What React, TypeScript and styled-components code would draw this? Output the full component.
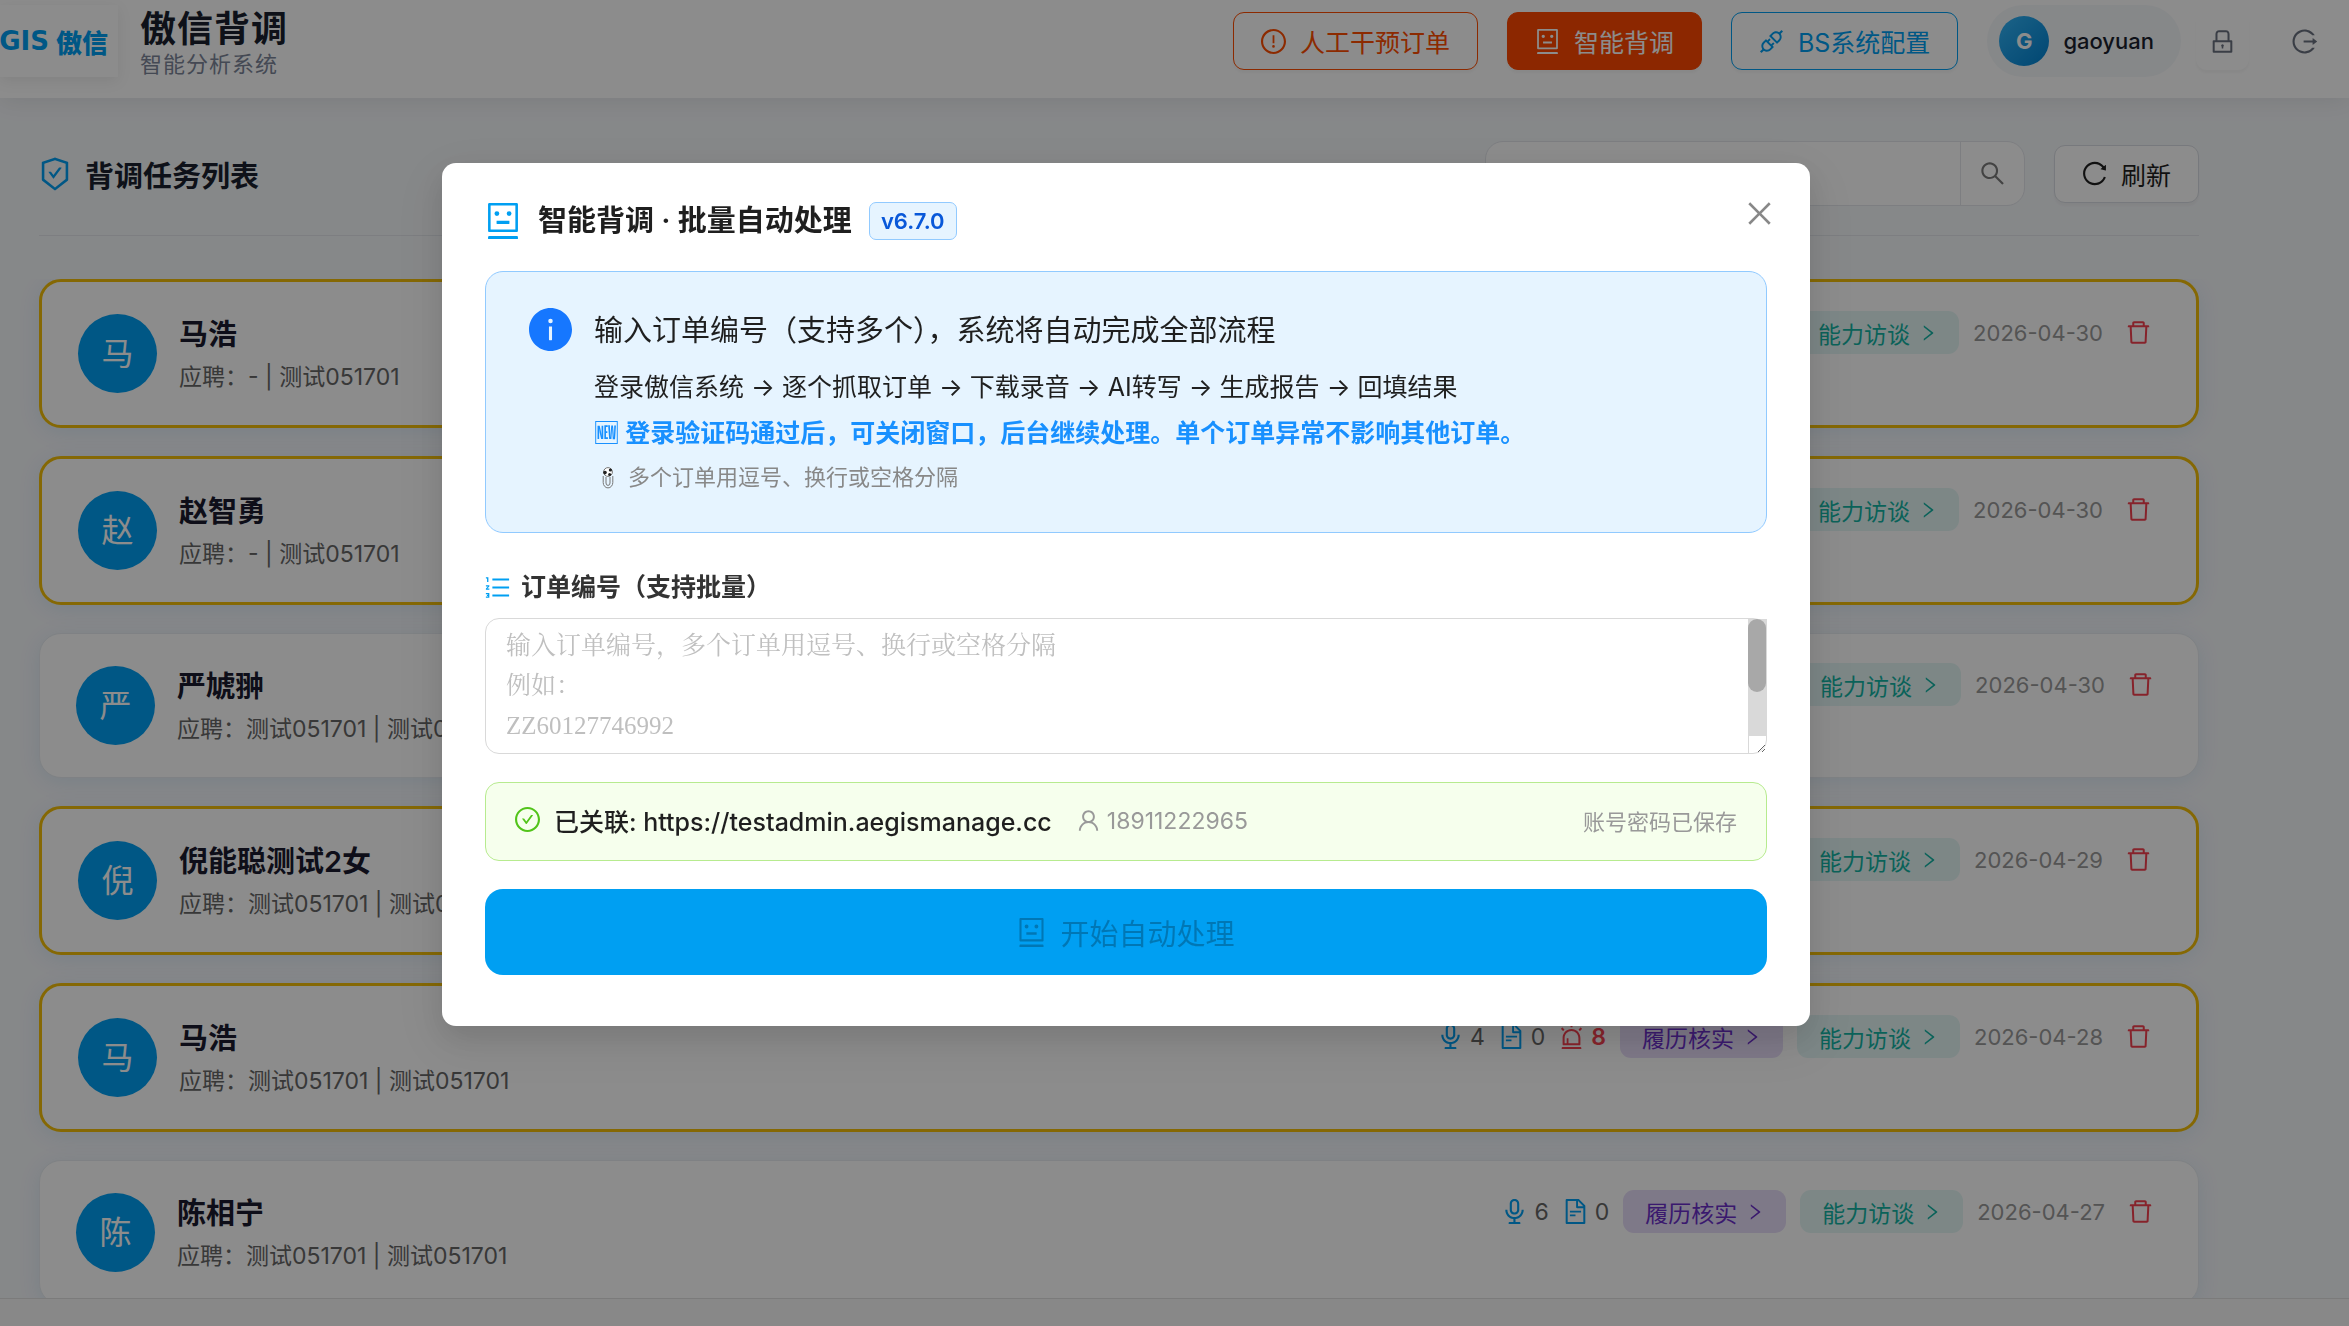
import React from "react";
import styled, { createGlobalStyle } from "styled-components";
import type { IconType } from "react-icons";
import {
  AiFillInfoCircle,
  AiOutlineAlert,
  AiOutlineApi,
  AiOutlineAudio,
  AiOutlineCheckCircle,
  AiOutlineClose,
  AiOutlineDelete,
  AiOutlineExclamationCircle,
  AiOutlineFileText,
  AiOutlineLock,
  AiOutlineLogout,
  AiOutlineOrderedList,
  AiOutlineReload,
  AiOutlineRight,
  AiOutlineRobot,
  AiOutlineSafetyCertificate,
  AiOutlineSearch,
  AiOutlineUser,
} from "react-icons/ai";

const GlobalStyle = createGlobalStyle`
  *, *::before, *::after { box-sizing: border-box; }
  html, body, #root { height: 100%; }
  body {
    margin: 0;
    overflow: hidden;
    background: #f5f7fa;
    color: #1f1f1f;
    font-family: Inter, "Noto Sans CJK SC", sans-serif;
    font-size: 25px;
  }
  button, input, textarea { font: inherit; color: inherit; margin: 0; }
  button { cursor: pointer; }
  h1, h2, h3, p { margin: 0; }
  svg { display: block; flex: none; overflow: visible; }
`;

/* The icon set keeps a 64-unit margin round each drawing; this view box trims it. */
function Icon({ of: Glyph, size = 25 }: { of: IconType; size?: number }) {
  return <Glyph size={size} viewBox="64 64 896 896" aria-hidden />;
}

const Page = styled.div`
  display: flex;
  flex-direction: column;
  height: 100vh;
`;

/* ---------- header ---------- */

const Header = styled.header`
  display: flex;
  flex: none;
  align-items: center;
  justify-content: space-between;
  height: 98px;
  padding: 0 18px 16px 0;
  background: #fff;
  box-shadow: 0 4px 22px rgba(0, 0, 0, 0.08);
  z-index: 1;
`;

const Brand = styled.div`
  display: flex;
  align-items: center;
  gap: 22px;
`;

const Logo = styled.div`
  display: flex;
  align-items: center;
  justify-content: flex-end;
  gap: 7px;
  width: 118px;
  height: 72px;
  padding-right: 10px;
  overflow: hidden;
  background: #fff;
  color: #009ff2;
  font-weight: 900;
  white-space: nowrap;
  box-shadow: 0 4px 14px rgba(0, 0, 0, 0.08);
`;

const LogoLatin = styled.span`
  font-family: "DejaVu Sans", sans-serif;
  font-weight: 700;
  font-size: 26px;
`;

const LogoHan = styled.span`
  font-size: 26px;
`;

const BrandText = styled.div`
  display: flex;
  flex-direction: column;
  padding-top: 2px;
`;

const BrandName = styled.h1`
  color: #1a1f2e;
  font-size: 36px;
  font-weight: 700;
  line-height: 44px;
  letter-spacing: 1px;
`;

const BrandSub = styled.span`
  color: #7d8699;
  font-size: 22px;
  line-height: 26px;
  letter-spacing: 1px;
`;

const HeaderActions = styled.div`
  display: flex;
  align-items: center;
  gap: 29px;
`;

type Tone = "warn" | "solid" | "info" | "plain";

const toneStyles: Record<Tone, string> = {
  warn: "background:#fff;color:#ff4d00;border-color:#ff4d00;",
  solid: "background:#ff4800;color:#fff;border-color:#ff4800;",
  info: "background:#fff;color:#009ff2;border-color:#009ff2;",
  plain: "background:#fff;color:#1f1f1f;border-color:#d9dde3;",
};

const ActionButton = styled.button<{ $tone: Tone }>`
  display: flex;
  align-items: center;
  gap: 14px;
  height: 58px;
  padding: 0 27px;
  border: 1px solid;
  border-radius: 11px;
  font-size: 25px;
  box-shadow: 0 3px 2px rgba(0, 0, 0, 0.03);
  ${(p) => toneStyles[p.$tone]}
`;

const UserPill = styled.div`
  display: flex;
  align-items: center;
  gap: 14px;
  height: 72px;
  margin-right: -14px;
  padding: 0 27px 0 12px;
  border-radius: 36px;
  background: #f5f7fa;
  color: #1a1f2e;
  font-size: 22px;
  font-weight: 500;
`;

const UserAvatar = styled.span`
  display: grid;
  place-items: center;
  width: 50px;
  height: 50px;
  border-radius: 50%;
  background: linear-gradient(135deg, #33b5f7, #0080d0);
  color: #fff;
  font-size: 22px;
  font-weight: 700;
`;

const IconButton = styled.button<{ $raised?: boolean }>`
  display: grid;
  place-items: center;
  width: 53px;
  height: 58px;
  padding: 0;
  border: 0;
  border-radius: 11px;
  background: transparent;
  color: #6b7280;
  box-shadow: ${(p) => (p.$raised ? "0 3px 2px rgba(0, 0, 0, 0.03)" : "none")};
`;

/* ---------- task list ---------- */

const Main = styled.main`
  display: flex;
  flex: 1;
  flex-direction: column;
  min-height: 0;
  padding: 43px 150px 0 39px;
  gap: 43px;
`;

const ListHeader = styled.div`
  display: flex;
  flex: none;
  align-items: center;
  justify-content: space-between;
  padding-bottom: 29px;
  border-bottom: 1px solid #e3e6eb;
`;

const ListTitle = styled.h2`
  display: flex;
  align-items: center;
  gap: 14px;
  color: #1a1f2e;
  font-size: 29px;
  font-weight: 700;

  svg { color: #009ff2; }
`;

const ListTools = styled.div`
  display: flex;
  align-items: center;
  gap: 29px;
`;

const SearchBox = styled.form`
  display: flex;
  width: 540px;
  height: 65px;
  border: 1px solid #e3e6eb;
  border-radius: 18px;
  background: #fff;
  overflow: hidden;
`;

const SearchInput = styled.input`
  flex: 1;
  min-width: 0;
  padding: 0 20px;
  border: 0;
  outline: 0;
  background: transparent;
`;

const SearchButton = styled.button`
  display: grid;
  place-items: center;
  width: 64px;
  padding: 0;
  border: 0;
  border-left: 1px solid #e3e6eb;
  background: transparent;
  color: #7a7a7a;
`;

const TaskList = styled.ul`
  display: flex;
  flex: 1;
  flex-direction: column;
  gap: 28px;
  min-height: 0;
  margin: 0 -39px;
  padding: 0 39px;
  overflow: hidden;
  list-style: none;
`;

const TaskCard = styled.li<{ $flagged: boolean }>`
  display: flex;
  flex: none;
  align-items: flex-start;
  justify-content: space-between;
  padding: 29px 36px;
  border: ${(p) => (p.$flagged ? "3px solid #f2be08" : "1px solid #e8ecf1")};
  border-radius: 22px;
  background: #fff;
  box-shadow: 0 4px 22px rgba(0, 120, 200, 0.1);
`;

const Person = styled.div`
  display: flex;
  align-items: center;
  gap: 22px;
  min-height: 85px;
`;

const PersonAvatar = styled.span`
  display: grid;
  place-items: center;
  width: 79px;
  height: 79px;
  border-radius: 50%;
  background: #009ff2;
  color: #fff;
  font-size: 32px;
  line-height: 40px;
`;

const PersonName = styled.h3`
  margin-bottom: 2px;
  color: #1a1a2e;
  font-size: 29px;
  font-weight: 600;
  line-height: 44px;
`;

const PersonNote = styled.p`
  color: #666;
  font-size: 23px;
  line-height: 36px;
`;

const TaskMeta = styled.div`
  display: flex;
  align-items: center;
  gap: 14px;
  font-size: 23px;
`;

const Stat = styled.span<{ $alert?: boolean }>`
  display: flex;
  align-items: center;
  gap: 7px;
  color: ${(p) => (p.$alert ? "#f5414f" : "#666")};
  font-weight: ${(p) => (p.$alert ? 600 : 400)};

  svg { color: ${(p) => (p.$alert ? "#f5414f" : "#009ff2")}; }
`;

const TagButton = styled.button<{ $kind: "resume" | "talk" }>`
  display: flex;
  align-items: center;
  gap: 9px;
  height: 43px;
  padding: 0 22px;
  border: 0;
  border-radius: 11px;
  background: ${(p) => (p.$kind === "resume" ? "#e6dcf8" : "#e3f6f5")};
  color: ${(p) => (p.$kind === "resume" ? "#6b2fc9" : "#13b3a3")};
`;

const TaskDate = styled.time`
  color: #999;
  font-size: 22px;
`;

const DeleteButton = styled.button`
  padding: 9px;
  border: 0;
  background: transparent;
  color: #f5414f;
`;

const Footer = styled.footer`
  flex: none;
  height: 28px;
  border-top: 1px solid #e0e0e0;
  background: #f7f7f7;
  z-index: 1;
`;

/* ---------- modal ---------- */

const Overlay = styled.div`
  position: fixed;
  inset: 0;
  z-index: 10;
  display: flex;
  align-items: flex-start;
  justify-content: center;
  padding: 163px 97px 0 0;
  background: rgba(0, 0, 0, 0.45);
`;

const Dialog = styled.section`
  width: 100%;
  max-width: 1368px;
  border-radius: 14px;
  background: #fff;
  box-shadow: 0 11px 29px rgba(0, 0, 0, 0.1), 0 16px 50px 14px rgba(0, 0, 0, 0.06);
`;

const DialogHeader = styled.header`
  display: flex;
  align-items: flex-start;
  justify-content: space-between;
  padding: 28px 29px 0 43px;
`;

const DialogTitle = styled.div`
  display: flex;
  align-items: center;
  gap: 17px;
  padding-top: 10px;

  svg { color: #009ff2; }

  h2 {
    color: #1f1f1f;
    font-size: 29px;
    font-weight: 600;
    line-height: 40px;
  }
`;

const Version = styled.span`
  padding: 0 11px;
  border: 1px solid #91caff;
  border-radius: 7px;
  background: #e6f4ff;
  color: #0958d9;
  font-size: 22px;
  font-weight: 600;
  line-height: 36px;
`;

const CloseButton = styled.button`
  display: grid;
  place-items: center;
  width: 44px;
  height: 44px;
  padding: 0;
  border: 0;
  background: transparent;
  color: #888;
`;

const DialogBody = styled.div`
  display: flex;
  flex-direction: column;
  gap: 28px;
  padding: 30px 43px 51px;
`;

const Notice = styled.div`
  display: flex;
  align-items: flex-start;
  gap: 22px;
  padding: 36px 43px 33px;
  border: 1px solid #91caff;
  border-radius: 18px;
  background: #e6f4ff;

  & > svg { color: #1677ff; }
`;

const NoticeText = styled.div`
  line-height: 45px;
`;

const NoticeTitle = styled.p`
  margin-bottom: 12px;
  font-size: 29px;
`;

const NoticeStrong = styled.p`
  color: #1890ff;
  font-weight: 600;
  line-height: 46px;
`;

const NoticeHint = styled.p`
  display: flex;
  align-items: center;
  gap: 14px;
  padding-left: 8px;
  color: #888;
  font-size: 22px;
  line-height: 43px;
`;

const Field = styled.div`
  display: flex;
  flex-direction: column;
  gap: 5px;
`;

const FieldLabel = styled.label`
  display: flex;
  align-items: center;
  gap: 11px;
  color: #333;
  font-weight: 600;
  line-height: 52px;

  svg { color: #009ff2; }
`;

const OrderBox = styled.div`
  position: relative;
`;

const OrderInput = styled.textarea`
  display: block;
  width: 100%;
  height: 136px;
  padding: 7px 20px;
  border: 1px solid #d9d9d9;
  border-radius: 14px;
  outline: 0;
  overflow-y: scroll;
  resize: vertical;
  scrollbar-width: none;
  font-family: "Liberation Serif", "Noto Serif CJK SC", "Noto Sans CJK SC", serif;
  line-height: 40px;

  &::placeholder { color: #bfbfbf; opacity: 1; }
`;

const ScrollTrack = styled.div`
  position: absolute;
  top: 1px;
  right: 0;
  bottom: 18px;
  width: 19px;
  background: #d9d9d9;
  pointer-events: none;

  &::before {
    content: "";
    display: block;
    width: 18px;
    height: 62%;
    border-radius: 9px;
    background: #a8a8a8;
  }

  &::after {
    content: "";
    position: absolute;
    top: 100%;
    left: 0;
    height: 17px;
    border-left: 1px solid #d9d9d9;
  }
`;

const Account = styled.div`
  display: flex;
  align-items: center;
  height: 79px;
  padding: 0 29px 4px;
  border: 1px solid #b7eb8f;
  border-radius: 14px;
  background: #f6ffed;

  & > svg { margin-right: 14px; color: #52c41a; }
`;

const AccountLink = styled.span`
  margin-right: 25px;
  font-weight: 500;
`;

const AccountUser = styled.span`
  display: flex;
  align-items: center;
  gap: 7px;
  padding-top: 2px;
  color: #999;
  font-size: 23px;
`;

const AccountState = styled.span`
  margin-left: auto;
  color: #999;
  font-size: 22px;
`;

const StartButton = styled.button`
  display: flex;
  align-items: center;
  justify-content: center;
  gap: 14px;
  height: 86px;
  border: 0;
  border-radius: 18px;
  background: #009ff2;
  color: rgba(0, 0, 0, 0.25);
  font-size: 29px;
`;

/* Small one-colour marker in front of the hint: a spotted head over a looped body. */
function HintMark() {
  return (
    <svg width="12" height="22" viewBox="0 0 12 22" fill="none" stroke="#777" aria-hidden>
      <circle cx="6" cy="5" r="4.4" fill="#fff" />
      <path d="M1.2 9v6.5a4.8 5.4 0 0 0 9.6 0V9" />
      <path d="M4 10v6a2 2.4 0 0 0 4 0v-6" />
      <g fill="#222" stroke="none">
        <circle cx="3" cy="5.6" r="1.8" />
        <circle cx="8.4" cy="3" r="1.6" />
        <circle cx="7.6" cy="7.6" r="1.5" />
      </g>
    </svg>
  );
}

type Task = {
  name: string;
  post: string;
  date: string;
  audio: number;
  files: number;
  alerts: number;
};

const tasks: Task[] = [
  { name: "马浩", post: "-", date: "2026-04-30", audio: 2, files: 0, alerts: 4 },
  { name: "赵智勇", post: "-", date: "2026-04-30", audio: 3, files: 0, alerts: 5 },
  { name: "严虓翀", post: "测试051701", date: "2026-04-30", audio: 4, files: 0, alerts: 0 },
  { name: "倪能聪测试2女", post: "测试051701", date: "2026-04-29", audio: 5, files: 0, alerts: 6 },
  { name: "马浩", post: "测试051701", date: "2026-04-28", audio: 4, files: 0, alerts: 8 },
  { name: "陈相宁", post: "测试051701", date: "2026-04-27", audio: 6, files: 0, alerts: 0 },
];

const placeholder = [
  "输入订单编号，多个订单用逗号、换行或空格分隔",
  "例如：",
  "ZZ60127746992",
].join("\n");

function TaskRow({ task }: { task: Task }) {
  return (
    <TaskCard $flagged={task.alerts > 0}>
      <Person>
        <PersonAvatar>{task.name[0]}</PersonAvatar>
        <div>
          <PersonName>{task.name}</PersonName>
          <PersonNote>应聘：{task.post} | 测试051701</PersonNote>
        </div>
      </Person>
      <TaskMeta>
        <Stat><Icon of={AiOutlineAudio} />{task.audio}</Stat>
        <Stat><Icon of={AiOutlineFileText} />{task.files}</Stat>
        {task.alerts > 0 && (
          <Stat $alert><Icon of={AiOutlineAlert} />{task.alerts}</Stat>
        )}
        <TagButton $kind="resume">履历核实<Icon of={AiOutlineRight} size={18} /></TagButton>
        <TagButton $kind="talk">能力访谈<Icon of={AiOutlineRight} size={18} /></TagButton>
        <TaskDate>{task.date}</TaskDate>
        <DeleteButton aria-label="删除"><Icon of={AiOutlineDelete} /></DeleteButton>
      </TaskMeta>
    </TaskCard>
  );
}

export default function App() {
  return (
    <>
      <GlobalStyle />
      <Page>
        <Header>
          <Brand>
            <Logo>
              <LogoLatin>GIS</LogoLatin>
              <LogoHan>傲信</LogoHan>
            </Logo>
            <BrandText>
              <BrandName>傲信背调</BrandName>
              <BrandSub>智能分析系统</BrandSub>
            </BrandText>
          </Brand>
          <HeaderActions>
            <ActionButton $tone="warn"><Icon of={AiOutlineExclamationCircle} />人工干预订单</ActionButton>
            <ActionButton $tone="solid"><Icon of={AiOutlineRobot} />智能背调</ActionButton>
            <ActionButton $tone="info"><Icon of={AiOutlineApi} />BS系统配置</ActionButton>
            <UserPill><UserAvatar>G</UserAvatar>gaoyuan</UserPill>
            <IconButton $raised aria-label="修改密码"><Icon of={AiOutlineLock} /></IconButton>
            <IconButton aria-label="退出登录"><Icon of={AiOutlineLogout} /></IconButton>
          </HeaderActions>
        </Header>
        <Main>
          <ListHeader>
            <ListTitle><Icon of={AiOutlineSafetyCertificate} size={32} />背调任务列表</ListTitle>
            <ListTools>
              <SearchBox>
                <SearchInput type="text" aria-label="搜索任务" />
                <SearchButton type="button" aria-label="搜索"><Icon of={AiOutlineSearch} /></SearchButton>
              </SearchBox>
              <ActionButton $tone="plain"><Icon of={AiOutlineReload} />刷新</ActionButton>
            </ListTools>
          </ListHeader>
          <TaskList>
            {tasks.map((task, i) => <TaskRow key={i} task={task} />)}
          </TaskList>
        </Main>
        <Footer />
      </Page>
      <Overlay>
        <Dialog role="dialog" aria-modal="true" aria-labelledby="dialog-title">
          <DialogHeader>
            <DialogTitle>
              <Icon of={AiOutlineRobot} size={36} />
              <h2 id="dialog-title">智能背调 · 批量自动处理</h2>
              <Version>v6.7.0</Version>
            </DialogTitle>
            <CloseButton aria-label="关闭"><Icon of={AiOutlineClose} size={29} /></CloseButton>
          </DialogHeader>
          <DialogBody>
            <Notice>
              <Icon of={AiFillInfoCircle} size={43} />
              <NoticeText>
                <NoticeTitle>输入订单编号（支持多个），系统将自动完成全部流程</NoticeTitle>
                <p>登录傲信系统 → 逐个抓取订单 → 下载录音 → AI转写 → 生成报告 → 回填结果</p>
                <NoticeStrong>🆕 登录验证码通过后，可关闭窗口，后台继续处理。单个订单异常不影响其他订单。</NoticeStrong>
                <NoticeHint><HintMark />多个订单用逗号、换行或空格分隔</NoticeHint>
              </NoticeText>
            </Notice>
            <Field>
              <FieldLabel htmlFor="orders"><Icon of={AiOutlineOrderedList} />订单编号（支持批量）</FieldLabel>
              <OrderBox>
                <OrderInput id="orders" placeholder={placeholder} />
                <ScrollTrack aria-hidden />
              </OrderBox>
            </Field>
            <Account>
              <Icon of={AiOutlineCheckCircle} />
              <AccountLink>已关联: https://testadmin.aegismanage.cc</AccountLink>
              <AccountUser><Icon of={AiOutlineUser} size={23} />18911222965</AccountUser>
              <AccountState>账号密码已保存</AccountState>
            </Account>
            <StartButton disabled><Icon of={AiOutlineRobot} size={29} />开始自动处理</StartButton>
          </DialogBody>
        </Dialog>
      </Overlay>
    </>
  );
}
